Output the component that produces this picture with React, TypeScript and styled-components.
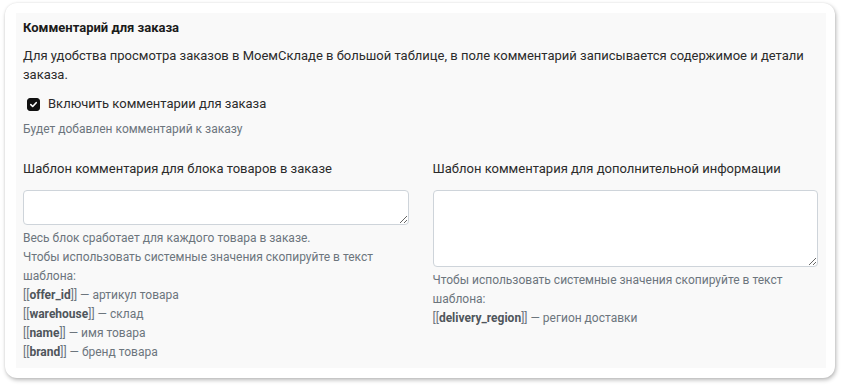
import React, { useState } from 'react';
import styled, { createGlobalStyle } from 'styled-components';

const GlobalStyle = createGlobalStyle`
  html, body {
    margin: 0;
    padding: 0;
    background: #ffffff;
  }
  body {
    font-family: Roboto, 'Noto Sans', 'Liberation Sans', sans-serif;
    color: #212529;
  }
`;

type Variable = {
  key: string;
  description: string;
};

const goodsVariables: Variable[] = [
  { key: 'offer_id', description: 'артикул товара' },
  { key: 'warehouse', description: 'склад' },
  { key: 'name', description: 'имя товара' },
  { key: 'brand', description: 'бренд товара' },
];

const extraVariables: Variable[] = [
  { key: 'delivery_region', description: 'регион доставки' },
];

const Page = styled.div`
  padding: 3px 7px 9px 5px;
`;

const Card = styled.div`
  background: #ffffff;
  border-radius: 12px;
  padding: 10px 9px 10px 11px;
  box-shadow: 1px 2px 4px rgba(0, 0, 0, 0.28), 0 0 2px rgba(0, 0, 0, 0.08);
`;

const Panel = styled.section`
  background: #f9f9f9;
  padding: 2px 8px 6px 7px;
`;

const Title = styled.h3`
  margin: 0;
  font-size: 13px;
  font-weight: 700;
  line-height: 26px;
  color: #1b1b1b;
`;

const Lead = styled.p`
  margin: 5px 0 0;
  font-size: 13px;
  line-height: 19px;
  color: #2b2b2b;
`;

const CheckRow = styled.label`
  display: flex;
  align-items: center;
  gap: 8px;
  margin: 10px 0 0 4px;
  font-size: 13px;
  line-height: 20px;
  color: #2b2b2b;
  cursor: pointer;
`;

const CheckBox = styled.span<{ $checked: boolean }>`
  width: 13px;
  height: 13px;
  border-radius: 3px;
  display: inline-flex;
  align-items: center;
  justify-content: center;
  background: ${(p) => (p.$checked ? '#111111' : '#ffffff')};
  border: 1px solid ${(p) => (p.$checked ? '#111111' : '#adb5bd')};
  box-sizing: border-box;
`;

const HiddenInput = styled.input`
  display: none;
`;

const Hint = styled.div`
  font-size: 12px;
  line-height: 19px;
  color: #6c757d;
`;

const CheckHint = styled(Hint)`
  margin-top: 6px;
`;

const Columns = styled.div`
  display: grid;
  grid-template-columns: 1fr 1fr;
  column-gap: 24px;
  margin-top: 21px;
`;

const Column = styled.div`
  display: flex;
  flex-direction: column;
`;

const FieldLabel = styled.div`
  font-size: 13px;
  line-height: 18px;
  color: #2b2b2b;
  margin-bottom: 12px;
`;

const TextArea = styled.textarea<{ $height: number }>`
  display: block;
  box-sizing: border-box;
  width: 100%;
  height: ${(p) => p.$height}px;
  margin: 0 0 4px;
  border: 1px solid #ced4da;
  border-radius: 4px;
  background: #ffffff;
  font: inherit;
  resize: vertical;
  outline: none;
`;

const VarKey = styled.b`
  font-weight: 700;
  color: #4f555b;
`;

const VariableList = ({ items }: { items: Variable[] }) => (
  <>
    {items.map((item) => (
      <Hint key={item.key}>
        [[<VarKey>{item.key}</VarKey>]] — {item.description}
      </Hint>
    ))}
  </>
);

export default function App() {
  const [enabled, setEnabled] = useState(true);

  return (
    <Page>
      <GlobalStyle />
      <Card>
        <Panel>
          <Title>Комментарий для заказа</Title>
          <Lead>
            Для удобства просмотра заказов в МоемСкладе в большой таблице, в поле
            комментарий записывается содержимое и детали заказа.
          </Lead>
          <CheckRow>
            <HiddenInput
              type="checkbox"
              checked={enabled}
              onChange={(e) => setEnabled(e.target.checked)}
            />
            <CheckBox $checked={enabled}>
              {enabled && (
                <svg width="9" height="9" viewBox="0 0 10 10">
                  <path
                    d="M2 5.2 L4.1 7.2 L8 3"
                    fill="none"
                    stroke="#ffffff"
                    strokeWidth="1.8"
                    strokeLinecap="round"
                    strokeLinejoin="round"
                  />
                </svg>
              )}
            </CheckBox>
            Включить комментарии для заказа
          </CheckRow>
          <CheckHint>Будет добавлен комментарий к заказу</CheckHint>

          <Columns>
            <Column>
              <FieldLabel>Шаблон комментария для блока товаров в заказе</FieldLabel>
              <TextArea $height={35} />
              <Hint>Весь блок сработает для каждого товара в заказе.</Hint>
              <Hint>
                Чтобы использовать системные значения скопируйте в текст
                шаблона:
              </Hint>
              <VariableList items={goodsVariables} />
            </Column>
            <Column>
              <FieldLabel>Шаблон комментария для дополнительной информации</FieldLabel>
              <TextArea $height={77} />
              <Hint>
                Чтобы использовать системные значения скопируйте в текст
                шаблона:
              </Hint>
              <VariableList items={extraVariables} />
            </Column>
          </Columns>
        </Panel>
      </Card>
    </Page>
  );
}
